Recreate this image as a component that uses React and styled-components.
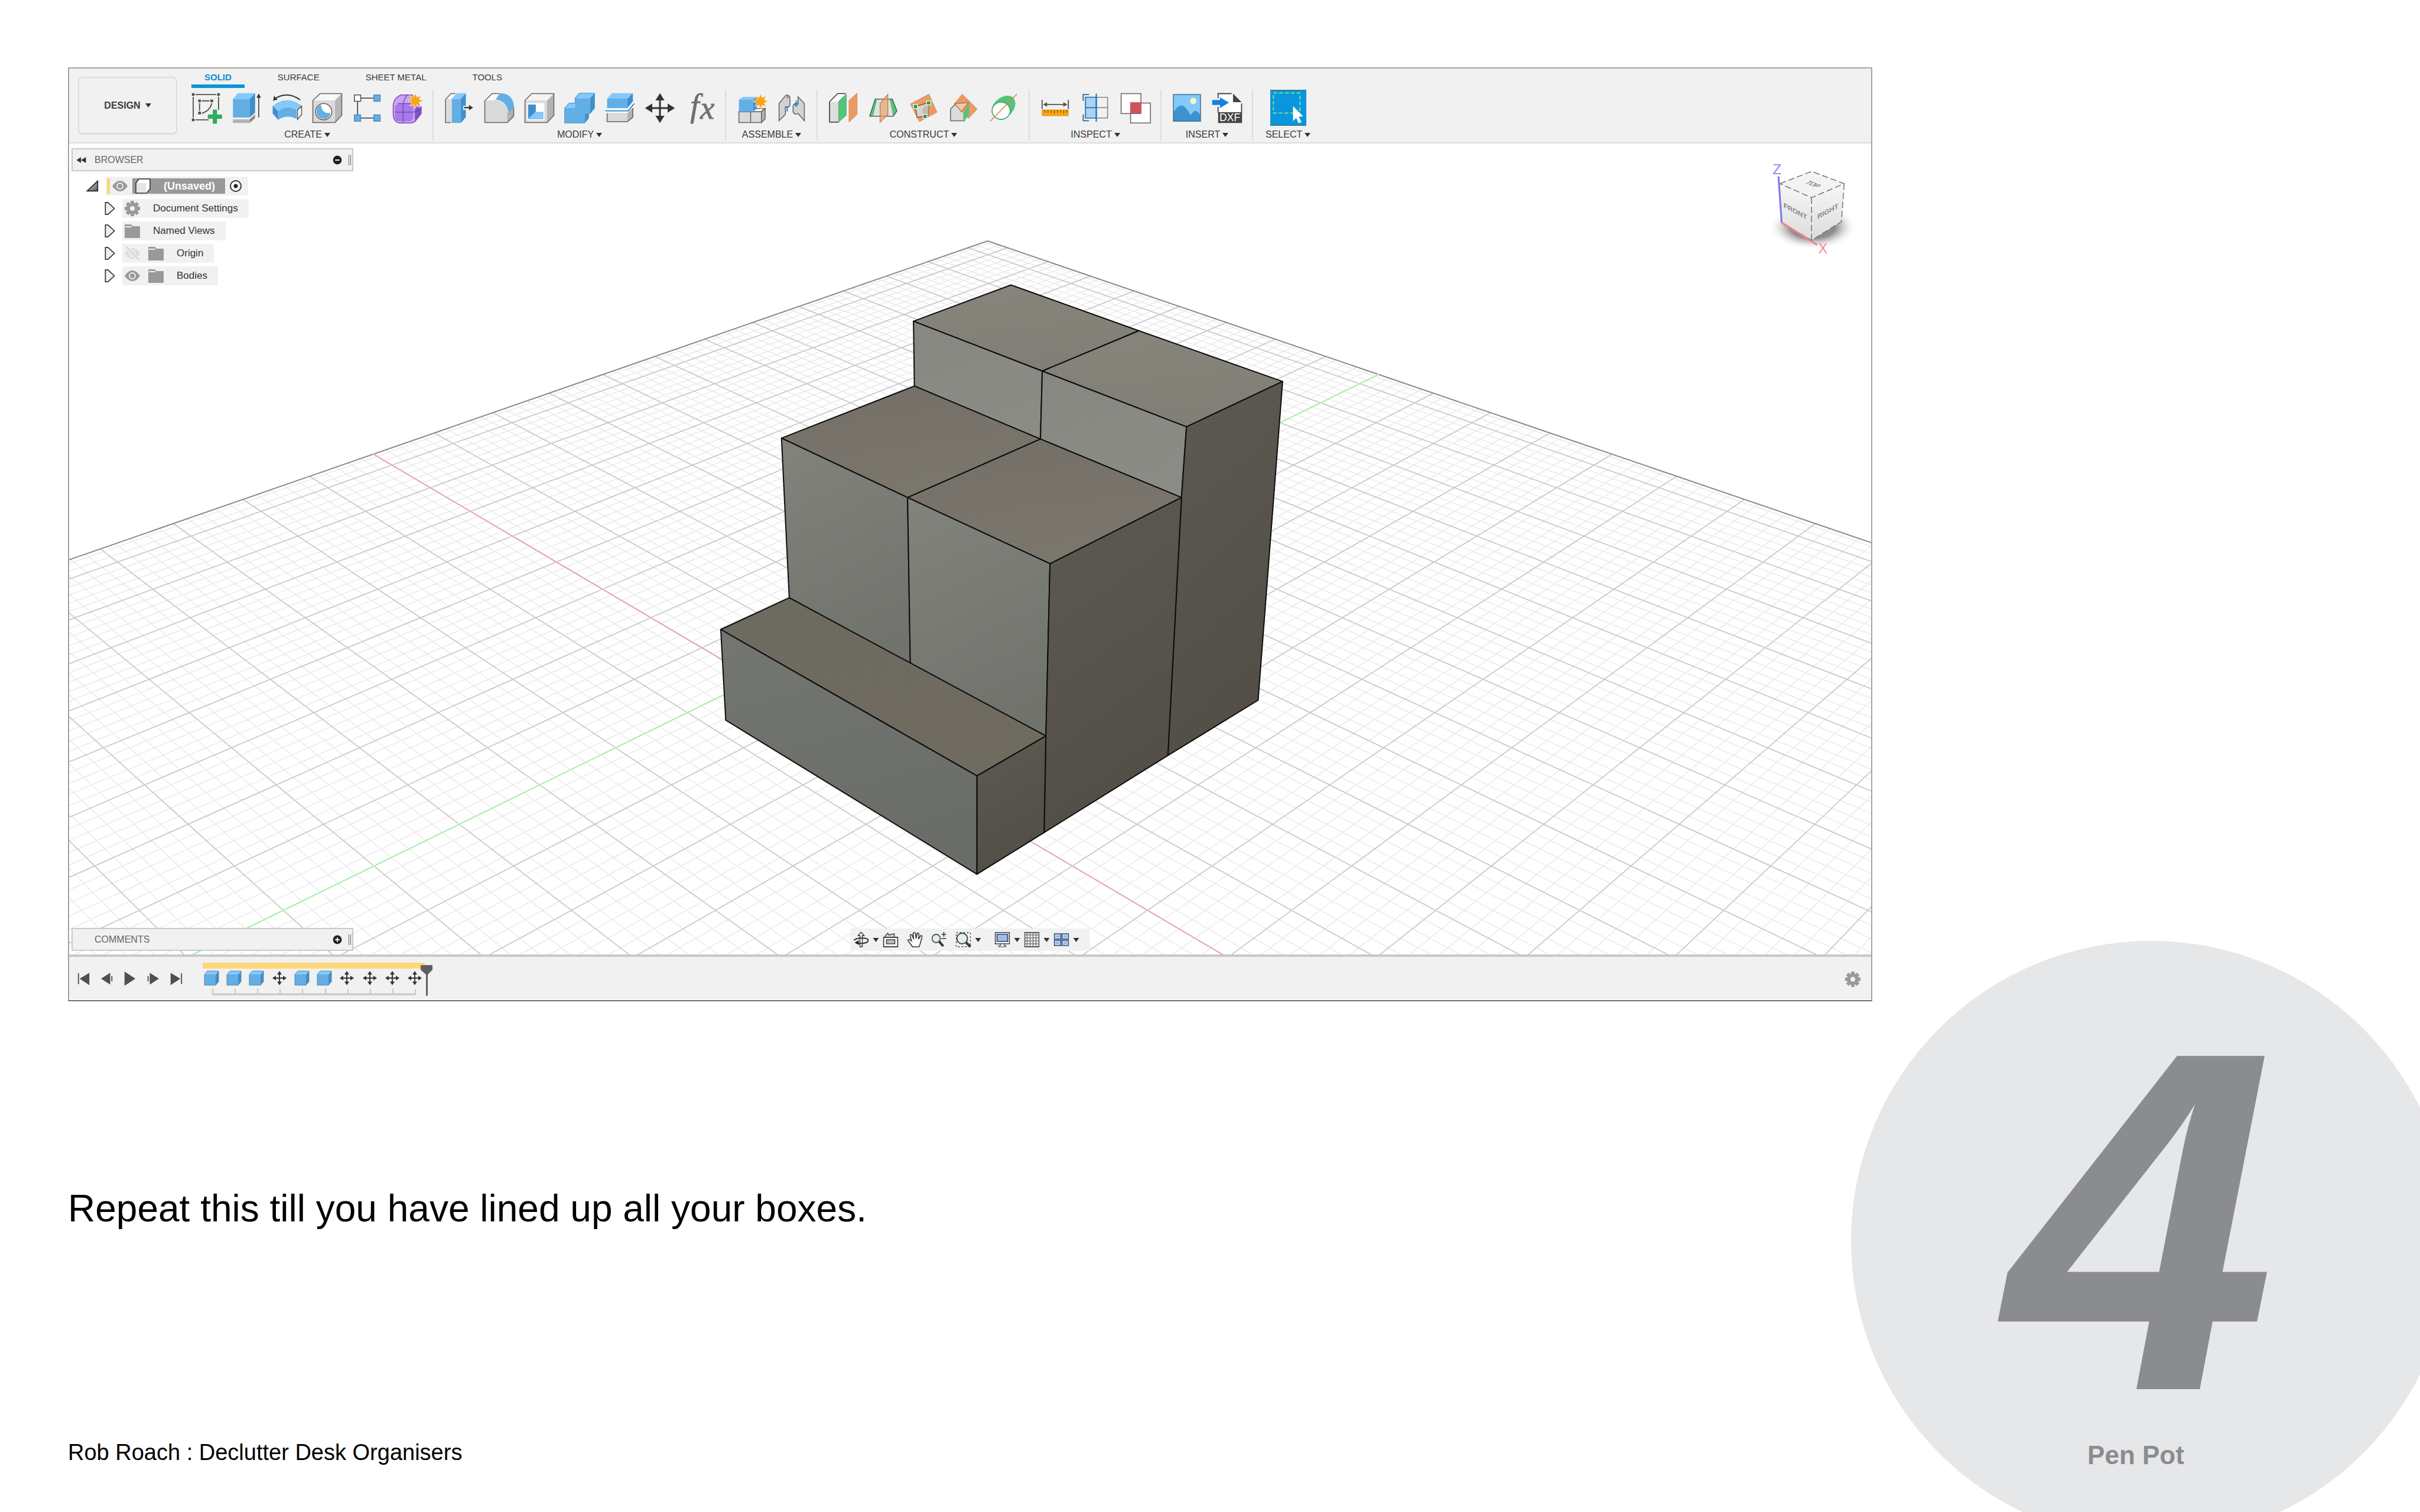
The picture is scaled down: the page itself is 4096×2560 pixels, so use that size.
import React, { useState } from 'react';
import styled, { createGlobalStyle } from 'styled-components';

const BLUE = '#62aee5';
const LIGHT = '#85c8fb';
const DARK = '#3f8fcc';
const LINE = '#6a6361';

/* ---------- toolbar icons, all drawn on a 68 x 68 board ---------- */

const starPoints = (cx, cy, outer, inner) =>
  Array.from({ length: 16 }, (_, i) => {
    const r = i % 2 ? inner : outer;
    const a = (Math.PI * i) / 8 - Math.PI / 2;
    return `${cx + r * Math.cos(a)},${cy + r * Math.sin(a)}`;
  }).join(' ');

const Star = ({ x, y }) => (
  <polygon points={starPoints(x, y, 17, 9)} fill="#fba512" stroke="#f1f1f1" strokeWidth="1" />
);

const toolIcons = {
  sketch: (
    <>
      <path d="M9 4H55M4 9V55M9 60H38M60 9V38M23 18H40M18 23V40M45 23Q42 39 23 46" fill="none" stroke="#55504e" strokeWidth="2.4" />
      <path d="M1 1h6v6h-6zM57 1h6v6h-6zM1 57h6v6h-6zM15 15h6v6h-6zM42 15h6v6h-6zM15 42h6v6h-6z" fill="#55504e" />
      <path d="M48 38h8v11h11v8h-11v11h-8v-11h-11v-8h11z" fill="#26b35b" stroke="#169144" strokeWidth="1" />
    </>
  ),
  extrude: (
    <>
      <path d="M3 14L14 1H52L40 14z" fill={LIGHT} />
      <path d="M3 14H40V55H3z" fill={BLUE} />
      <path d="M40 14L52 1V44L40 55z" fill={DARK} />
      <path d="M3 59H40V67H3z" fill="#b5b3b2" />
      <path d="M40 59L52 48V56L40 67z" fill="#8e8b8a" />
      <path d="M60 8V55" stroke="#333" strokeWidth="2" />
      <path d="M60 2l5 9h-10z" fill="#333" />
    </>
  ),
  revolve: (
    <>
      <path d="M6 14Q34 -5 63 16" fill="none" stroke="#333" strokeWidth="2.6" />
      <path d="M3 18L5 7L13 15z" fill="#333" />
      <path d="M2 29Q34 4 67 29L55 38Q34 26 14 41z" fill={LIGHT} />
      <path d="M14 41Q34 26 55 38V58Q34 47 14 60z" fill={BLUE} />
      <path d="M2 29L14 41V60L2 46z" fill={DARK} />
      <path d="M57 38L66 30V48L57 59z" fill="#fff" stroke="#555" strokeWidth="2" />
    </>
  ),
  hole: (
    <>
      <path d="M2 17L18 2H66L51 17z" fill="#f8f8f8" />
      <path d="M2 17H51V66H2z" fill="#dadada" />
      <path d="M51 17L66 2V50L51 66z" fill="#b9b7b6" />
      <path d="M2 17L18 2H66V50L51 66H2z" fill="none" stroke={LINE} strokeWidth="2" />
      <circle cx="26" cy="42" r="18" fill="#fff" stroke={LINE} strokeWidth="2" />
      <path d="M20 27C22 42 30 47 41 44C40 52 34 58 26 58C17 58 10 51 10 42C10 35 14 29 20 27z" fill={BLUE} />
    </>
  ),
  pattern: (
    <>
      <path d="M19 12H48M12 19V49M19 56H48" stroke="#55504e" strokeWidth="2.4" />
      <path d="M5 5h14v14h-14z" fill="#fff" stroke="#55504e" strokeWidth="2" />
      <path d="M48 5h14v14h-14zM5 49h14v14h-14zM48 49h14v14h-14z" fill={BLUE} stroke="#4d8fc0" strokeWidth="2" />
    </>
  ),
  form: (
    <>
      <path d="M2 28Q3 12 18 5H44L64 32V46L50 64Q46 67 42 67H16Q4 66 2 50z" fill="#c9a3f5" stroke="#7d4cc0" strokeWidth="2" />
      <path d="M50 30L64 34V46L50 63z" fill="#7f52c4" />
      <rect x="6" y="25" width="40" height="38" rx="8" fill="#a879ea" />
      <path d="M6 43H46Q58 41 64 34M24 25V66M24 25Q27 10 34 5M12 24H44" fill="none" stroke="#6f42b3" strokeWidth="1.6" />
      <Star x={51} y={18} />
    </>
  ),
  pressPull: (
    <>
      <path d="M4 15L16 2H26L18 14V66H4z" fill="#dcdcdc" />
      <path d="M4 15L16 2H26L17 14H4z" fill="#fbfbfb" />
      <path d="M26 2H16L4 15V66H16" fill="none" stroke={LINE} strokeWidth="2" />
      <path d="M18 14L29 1H49L38 14z" fill={LIGHT} />
      <path d="M18 14H38V67H18z" fill={BLUE} />
      <path d="M38 14L49 1V54L38 67z" fill={DARK} />
      <path d="M43 29H57V38H43z" fill="#f1f1f1" />
      <path d="M45 33H59" stroke="#333" strokeWidth="3" />
      <path d="M56 27L65 33L56 39z" fill="#333" />
    </>
  ),
  fillet: (
    <>
      <path d="M2 18L18 2H34L26 16Q50 20 52 43L66 33V52L52 66H2z" fill="#dadada" />
      <path d="M2 18L18 2H34L26 16z" fill="#fafafa" />
      <path d="M52 44L66 33V52L52 66z" fill="#b3b1b0" />
      <path d="M34 2H18L2 18V66H52L66 52V33" fill="none" stroke={LINE} strokeWidth="2" />
      <path d="M26 15L36 1Q66 2 67 34L54 43Q50 18 26 15z" fill={BLUE} />
    </>
  ),
  shell: (
    <>
      <path d="M2 17L17 2H66L51 17z" fill="#f4f4f4" />
      <path d="M2 17H51V66H2z" fill="#dadada" />
      <path d="M51 17L66 2V50L51 66z" fill="#b5b3b2" />
      <path d="M2 17L17 2H66V50L51 66H2z" fill="none" stroke={LINE} strokeWidth="2" />
      <path d="M7 23H45V61H7z" fill="#fff" />
      <path d="M9 26H26V42L9 58z" fill={DARK} />
      <path d="M9 58L26 43H42V58z" fill={LIGHT} stroke={BLUE} strokeWidth="1" />
    </>
  ),
  combine: (
    <>
      <path d="M24 12L33 1H67L57 12z" fill={LIGHT} />
      <path d="M1 34L11 23H24V34z" fill={LIGHT} />
      <path d="M24 12H57V46H45V67H1V34H24z" fill={BLUE} />
      <path d="M57 12L67 1V34L57 46z" fill={DARK} />
      <path d="M45 46H54V56L45 67z" fill={DARK} />
      <path d="M1 34V67H45L54 56V46H57L67 34V1H33L24 12V23H11z" fill="none" stroke="#4295d0" strokeWidth="1.4" />
    </>
  ),
  split: (
    <>
      <path d="M6 13L17 1H63L51 13z" fill={LIGHT} />
      <path d="M6 13H51V34H6z" fill={BLUE} />
      <path d="M51 13L63 1V19L51 34z" fill={DARK} />
      <path d="M2 40H53L66 24" fill="none" stroke="#fff" strokeWidth="7" />
      <path d="M2 40H53L66 24" fill="none" stroke="#1583c7" strokeWidth="2.4" />
      <path d="M6 45H51V64H6z" fill="#dadada" />
      <path d="M51 45L63 33V54L51 64z" fill="#b5b3b2" />
      <path d="M6 45V64H51L63 54V34" fill="none" stroke={LINE} strokeWidth="2" />
    </>
  ),
  move: (
    <>
      <path d="M34 10V58M10 34H58" stroke="#333" strokeWidth="4" />
      <path d="M34 1L44 17H24zM34 67L44 51H24zM1 34L17 24V44zM67 34L51 24V44z" fill="#333" />
    </>
  ),
  params: (
    <g fontFamily="Liberation Serif, serif" fontStyle="italic" fill="#6f6f6f" stroke="#6f6f6f">
      <text x="12" y="52" fontSize="72">f</text>
      <text x="34" y="57" fontSize="72">x</text>
    </g>
  ),
  component: (
    <>
      <path d="M6 42H32V66H6zM32 42H56V66H32z" fill="#dadada" stroke={LINE} strokeWidth="2" />
      <path d="M32 42L39 35H64L56 42z" fill="#fafafa" stroke={LINE} strokeWidth="2" />
      <path d="M56 42L64 35V58L56 66z" fill="#b5b3b2" stroke={LINE} strokeWidth="2" />
      <path d="M6 15L15 9H46L38 15z" fill={LIGHT} />
      <path d="M6 15H38V42H6z" fill={BLUE} />
      <path d="M38 15L46 9V34L38 42z" fill={DARK} />
      <Star x={54} y={19} />
    </>
  ),
  joint: (
    <>
      <path d="M6 24L20 7Q24 3 28 7Q31 9 30 15V28Q27 34 20 31V48L6 62z" fill="#d2d2d2" stroke={LINE} strokeWidth="2" />
      <path d="M62 24L48 9V24Q38 22 37 30V42Q40 50 48 46L62 62z" fill="#d2d2d2" stroke={LINE} strokeWidth="2" />
      <path d="M24 30V42M44 17V28" stroke="#1583c7" strokeWidth="2.4" />
      <path d="M40 24L44 30L48 24" fill="none" stroke="#1583c7" strokeWidth="2" />
      <circle cx="25" cy="10" r="2" fill={LINE} />
    </>
  ),
  offsetPlane: (
    <>
      <path d="M4 20L22 2H40L24 20V65H4z" fill="#dedede" />
      <path d="M4 20L22 2H40L24 20z" fill="#fff" />
      <path d="M24 65H4V20L22 2H40" fill="none" stroke="#333" strokeWidth="2" />
      <path d="M24 19L41 3V50L24 65z" fill="#55c47b" stroke="#3da565" strokeWidth="1" />
      <path d="M47 17L65 1V48L47 65z" fill="#ea9a63" stroke="#d0814b" strokeWidth="1" />
    </>
  ),
  midPlane: (
    <>
      <path d="M4 52L16 14H54L64 40L56 52z" fill="#dfe3e1" />
      <path d="M4 52L16 14L20 16L12 50zM48 14H54L65 41L56 53z" fill="#55c47b" />
      <path d="M4 52L16 14H54L64 40L56 52z" fill="none" stroke="#4c6457" strokeWidth="2" />
      <path d="M27 24L44 4V48L27 65z" fill="#ea9a63" fillOpacity="0.6" stroke="#d0814b" strokeWidth="2" />
    </>
  ),
  anglePlane: (
    <>
      <path d="M5 25L46 3L64 43L25 64z" fill="#ea9a63" stroke="#d0814b" strokeWidth="1" />
      <path d="M16 30L46 22L44 50L20 55z" fill="#ddd2cb" stroke="#7b5743" strokeWidth="2" />
      <path d="M32 36L46 22L44 50L33 53z" fill="#c3bab4" />
      <path d="M12 26h9v9h-9zM41 18h9v9h-9zM33 48h9v9h-9z" fill="#20a04c" stroke="#fff" strokeWidth="1.6" />
    </>
  ),
  tangentPlane: (
    <>
      <path d="M5 36L18 23H36V62H5z" fill="#dcdcdc" stroke={LINE} strokeWidth="2" />
      <path d="M31 3L64 36L45 57L14 24z" fill="#ea9a63" stroke="#d0814b" strokeWidth="1" />
      <path d="M14 24L45 22L29 42z" fill="#f2c9ab" stroke="#a56b41" strokeWidth="1.6" />
      <path d="M33 46L46 23V50L33 64z" fill="#55c47b" />
    </>
  ),
  axis: (
    <>
      <path d="M8 40C6 18 38 -2 54 10C66 22 58 46 34 58C50 40 46 26 32 24C20 24 9 32 8 40z" fill="#55c47b" />
      <ellipse cx="28" cy="40" rx="20" ry="19" fill="#fff" stroke="#3da565" strokeWidth="2" />
      <path d="M4 63L63 3" stroke="#e07a55" strokeWidth="2" />
    </>
  ),
  measure: (
    <>
      <path d="M5 16V36M63 16V36M9 26H59" stroke="#55504e" strokeWidth="2.4" />
      <path d="M7 26l9-5v10zM61 26l-9-5v10z" fill="#55504e" />
      <path d="M5 38H63V51H5z" fill="#fba512" stroke="#d88a08" strokeWidth="1" />
      <path d="M11 39v5M18 39v5M25 39v5M32 39v7M39 39v5M46 39v5M53 39v7M60 39v5" stroke="#6d4707" strokeWidth="1.6" />
    </>
  ),
  section: (
    <>
      <path d="M36 10H61V56H36M36 33H61" fill="none" stroke="#8d7f7a" strokeWidth="2" />
      <path d="M12 10H36V56H12z" fill="#aed2ee" stroke="#2c79b4" strokeWidth="2.4" />
      <path d="M12 33H36" stroke="#2c79b4" strokeWidth="2.4" />
      <path d="M36 2V64" stroke="#1583c7" strokeWidth="3" />
      <path d="M20 4H7V18M20 62H7V48" fill="none" stroke="#2a6a98" strokeWidth="2.4" />
    </>
  ),
  interference: (
    <>
      <path d="M23 23H67V67H23z" fill="#fff" stroke={LINE} strokeWidth="2" />
      <path d="M2 2H46V46H2z" fill="#fff" stroke={LINE} strokeWidth="2" />
      <path d="M22 21H47V46H22z" fill="#cf5459" />
    </>
  ),
  image: (
    <>
      <path d="M4 4H64V63H4z" fill={LIGHT} />
      <circle cx="48" cy="18" r="7" fill="#fff6c5" />
      <path d="M4 44Q13 28 22 28Q31 29 42 50Q48 40 53 40Q59 42 64 50V63H4z" fill="#3c92cc" />
      <path d="M4 4H64V63H4z" fill="none" stroke="#43718f" strokeWidth="2" />
    </>
  ),
  dxf: (
    <>
      <path d="M14 3H46L66 22V60H14z" fill="#fff" />
      <path d="M14 12V2H44M66 24V44M14 31V44" fill="none" stroke="#444" strokeWidth="2.4" />
      <path d="M47 2L66 21H47z" fill="#444" />
      <path d="M14 43H67V67H14z" fill="#444" />
      <path d="M1 16H18V10L38 22L18 34V27H1z" fill="#1583dd" />
      <text x="40" y="63" textAnchor="middle" fontFamily="Liberation Sans, sans-serif" fontSize="23" fill="#fff">DXF</text>
    </>
  ),
  select: (
    <>
      <path d="M0 0H68V68H0z" fill="#0a96dd" />
      <path d="M0 1H68M0 67H68" stroke="#2f7f8b" strokeWidth="2" />
      <path d="M6 6H56V44H6z" fill="none" stroke="#7eea8e" strokeWidth="2" strokeDasharray="7 4" />
      <path d="M43 31L62 50L54 51L59 61L53 63L49 53L43 59z" fill="#fff" />
    </>
  ),
};

const ToolIcon = ({ name }) => (
  <svg viewBox="0 0 68 68" overflow="visible" aria-hidden="true">{toolIcons[name]}</svg>
);

/* ---------- small icons, 26 x 26 ---------- */

const teeth = Array.from({ length: 8 }, (_, i) => i * 45);

const smallIcons = {
  gear: (
    <>
      {teeth.map((a) => (
        <path key={a} d="M10 0H16V6H10z" fill="#999" transform={`rotate(${a} 13 13)`} />
      ))}
      <circle cx="13" cy="13" r="7" fill="none" stroke="#999" strokeWidth="6" />
    </>
  ),
  folder: <path d="M0 2H11L14 5H26V25H0zM1 5V7H12V5z" fill="#999" fillRule="evenodd" />,
  eye: (
    <>
      <path d="M0 13Q6 4 13 4Q20 4 26 13Q20 22 13 22Q6 22 0 13z" fill="#999" />
      <circle cx="13" cy="13" r="5" fill="none" stroke="#eee" strokeWidth="2" />
    </>
  ),
  eyeOff: (
    <>
      <path d="M0 13Q6 4 13 4Q20 4 26 13Q20 22 13 22Q6 22 0 13z" fill="#dcdcdc" />
      <circle cx="13" cy="13" r="5" fill="none" stroke="#eee" strokeWidth="2" />
      <path d="M3 2L24 24" stroke="#f1f1f1" strokeWidth="5" />
      <path d="M3 2L24 24" stroke="#d0d0d0" strokeWidth="2" />
    </>
  ),
  doc: (
    <>
      <path d="M1 8L6 1H25V18L19 25H1z" fill="#fff" />
      <path d="M2 8H19V24H2z" fill="#e3e4ea" />
      <path d="M1 8L6 1H25V18L19 25H1z" fill="none" stroke="#333" strokeWidth="1.6" />
      <path d="M19 8V24" stroke="#fff" strokeWidth="1.6" />
    </>
  ),
  first: <path d="M3 3V23M22 4L7 13L22 23z" fill="#4f4f4f" stroke="#4f4f4f" strokeWidth="2" />,
  back: <path d="M18 4L4 13L18 22zM22 8V18" fill="#4f4f4f" stroke="#4f4f4f" strokeWidth="2" />,
  play: <path d="M3 0L23 13L3 26z" fill="#4f4f4f" />,
  forward: <path d="M8 4L22 13L8 22zM4 8V18" fill="#4f4f4f" stroke="#4f4f4f" strokeWidth="2" />,
  last: <path d="M23 3V23M4 4L19 13L4 23z" fill="#4f4f4f" stroke="#4f4f4f" strokeWidth="2" />,
  cube: (
    <>
      <path d="M1 7L6 1H25L20 7z" fill={LIGHT} />
      <path d="M1 7H20V25H1z" fill={BLUE} />
      <path d="M20 7L25 1V19L20 25z" fill={DARK} />
      <path d="M1 25V7L6 1H25V19L20 25z" fill="none" stroke="#5d87a3" strokeWidth="1" />
    </>
  ),
  move: (
    <>
      <path d="M13 4V22M4 13H22" stroke="#333" strokeWidth="2" />
      <path d="M13 1L17 7H9zM13 25L17 19H9zM1 13L7 9V17zM25 13L19 9V17z" fill="#333" />
    </>
  ),
  orbit: (
    <>
      <path d="M11 25V6H8L13 0L18 6H15V25z" fill="#fff" stroke="#333" strokeWidth="1.4" />
      <path d="M8 19C14 20 25 19 25 14C25 9 6 9 1 14" fill="none" stroke="#333" strokeWidth="2.2" />
      <path d="M2 18L9 14V22z" fill="#222" />
    </>
  ),
  lookAt: (
    <>
      <path d="M1 9H25V25H1z" fill="#fff" stroke="#444" strokeWidth="2" />
      <path d="M3 8L8 2L10 5L19 3V8" fill="#ddd" stroke="#444" strokeWidth="1.6" />
      <path d="M6 13H20V20H6z" fill="#b9bdc9" stroke="#444" strokeWidth="1.6" />
    </>
  ),
  pan: (
    <path d="M9 25C6 21 4 18 1 14Q3 11 7 15L5 6Q6 3 8 5L11 12L10 2Q12 0 14 2L15 11L17 2Q19 1 20 4L19 12L23 6Q26 6 25 9C23 14 23 19 20 25z" fill="#fff" stroke="#333" strokeWidth="1.6" />
  ),
  zoom: (
    <>
      <circle cx="8" cy="11" r="7" fill="#dff0ee" stroke="#555" strokeWidth="1.8" />
      <path d="M13 16L20 24" stroke="#333" strokeWidth="4" />
      <path d="M21 0V8M17 4H25M17 11H25" stroke="#333" strokeWidth="1.6" />
    </>
  ),
  fit: (
    <>
      <path d="M1 1H25V25H1z" fill="none" stroke="#444" strokeWidth="1.4" strokeDasharray="3 3" />
      <circle cx="11" cy="11" r="9" fill="#dff0ee" stroke="#444" strokeWidth="2" />
      <path d="M18 18L25 25" stroke="#333" strokeWidth="4" />
    </>
  ),
  display: (
    <>
      <path d="M1 1H25V20H1z" fill="#fff" stroke="#333d50" strokeWidth="1.6" />
      <path d="M4 4H22V16H4z" fill="#9dbfea" stroke="#333d50" strokeWidth="1.6" />
      <path d="M10 20V23H7V25H19V23H16V20z" fill="#fff" stroke="#333d50" strokeWidth="1.2" />
    </>
  ),
  grid: (
    <>
      <path d="M1 1H25V25H1z" fill="#fff" stroke="#555" strokeWidth="1.8" />
      <path d="M5 1V25M10 1V25M15 1V25M20 1V25M1 5H25M1 10H25M1 15H25M1 20H25" stroke="#777" strokeWidth="1.6" />
    </>
  ),
  views: (
    <>
      <path d="M1 3H12V12H1zM14 3H25V12H14zM1 14H12V23H1zM14 14H25V23H14z" fill="#b9d2f2" stroke="#33507f" strokeWidth="1.6" />
      <path d="M4 6H9V9H4zM17 6H22V9H17zM4 17H9V20H4zM17 17H22V20H17z" fill="#8fb4e4" />
    </>
  ),
  rewind: <path d="M13 7V19L4 13zM23 7V19L13 13z" fill="#333" />,
  minus: (
    <>
      <circle cx="13" cy="13" r="12" fill="#222" />
      <path d="M7 13H19" stroke="#fff" strokeWidth="3" />
    </>
  ),
  plus: (
    <>
      <circle cx="13" cy="13" r="12" fill="#222" />
      <path d="M7 13H19M13 7V19" stroke="#fff" strokeWidth="3" />
    </>
  ),
  open: (
    <>
      <linearGradient id="openFade" x1="0" y1="0" x2="1" y2="1">
        <stop offset="0" stopColor="#eee" />
        <stop offset="1" stopColor="#555" />
      </linearGradient>
      <path d="M24 3V23H3z" fill="url(#openFade)" stroke="#222" strokeWidth="2" />
    </>
  ),
  closed: <path d="M4 1L9 1L22 13L9 25H4z" fill="#efefef" stroke="#333" strokeWidth="2" />,
};

const SmallIcon = ({ name, size = 26 }) => (
  <svg width={size} height={size} viewBox="0 0 26 26" aria-hidden="true">{smallIcons[name]}</svg>
);

/* ---------- ground plane ---------- */

// u runs down the left edge of the plane, v down the right one, in major cells
const project = (u, v) => {
  const depth = 58.975 - u - v;
  return [
    (2134.9 + (5078 * (v - u) + 2450) / depth).toFixed(1),
    (-1216.5 + 103120 / depth).toFixed(1),
  ].join(' ');
};

const U_MAX = 28;
const V_MAX = 24;
const alongV = (u) => `M${project(u, 0)}L${project(u, V_MAX)}`;
const alongU = (v) => `M${project(0, v)}L${project(U_MAX, v)}`;

const steps = (from, step, max, make) => {
  let d = '';
  for (let i = 0; from + i * step < max; i += 1) d += make(from + i * step);
  return d;
};

const minorLines = steps(0.1, 0.2, U_MAX, alongV) + steps(0.1, 0.2, V_MAX, alongU);
const majorLines = steps(0.5, 1, U_MAX, alongV) + steps(0.5, 1, V_MAX, alongU);

const faces = [
  ['topHigh', '2228,629 2510,730 2297,819 2013,709'],
  ['topHigh', '2510,730 2827,842 2615,942 2297,819'],
  ['frontHigh', '2013,709 2297,819 2293,969 2015,852'],
  ['frontHigh', '2297,819 2615,942 2604,1098 2293,969'],
  ['side', '2827,842 2773,1545 2574,1667 2604,1098 2615,942'],
  ['topMid', '2015,852 2293,969 2000,1098 1722,967'],
  ['topMid', '2293,969 2604,1098 2314,1244 2000,1098'],
  ['front', '1722,967 2000,1098 2006,1465 1739,1319'],
  ['front', '2000,1098 2314,1244 2305,1624 2006,1465'],
  ['side', '2604,1098 2574,1667 2301,1837 2305,1624 2314,1244'],
  ['topLow', '1739,1319 2305,1624 2153,1712 1588,1389'],
  ['frontLow', '1588,1389 2153,1712 2153,1929 1599,1589'],
  ['side', '2305,1624 2301,1837 2153,1929 2153,1712'],
];

const shades = {
  topHigh: ['#87847b', '#817e76'],
  topMid: ['#747068', '#7b776d'],
  topLow: ['#6d6a60', '#706b5f'],
  frontHigh: ['#868881', '#8b8c85'],
  front: ['#80827b', '#70726c'],
  frontLow: ['#737570', '#6a6c67'],
  side: ['#5c5952', '#524e46'],
};

const Model = () => (
  <Scene viewBox="151 317 3974 1789" preserveAspectRatio="xMidYMid slice" role="img" aria-label="Stepped boxes on the ground plane">
    <defs>
      {Object.entries(shades).map(([id, [from, to]]) => (
        <linearGradient key={id} id={id} x1="0.3" y1="0" x2="0.6" y2="1">
          <stop offset="0" stopColor={from} />
          <stop offset="1" stopColor={to} />
        </linearGradient>
      ))}
    </defs>
    <g fill="none">
      <path d={minorLines} stroke="#eaeaea" strokeWidth="2" />
      <path d={majorLines} stroke="#c9c9c9" strokeWidth="2.2" />
      <path d={alongV(0) + alongU(0)} stroke="#8a8a8a" strokeWidth="2.6" />
      <path d={alongU(8.5) + alongV(12.5)} stroke="#fff" strokeWidth="4" />
      <path d={alongV(12.5)} stroke="#e3a3a3" strokeWidth="2.6" />
      <path d={alongU(8.5)} stroke="#a2eea2" strokeWidth="2.6" />
    </g>
    <g stroke="#0c0c0c" strokeWidth="2.6" strokeLinejoin="round">
      {faces.map(([shade, points]) => (
        <polygon key={points} points={points} fill={`url(#${shade})`} />
      ))}
    </g>
  </Scene>
);

const ViewCube = () => (
  <CubeBox viewBox="0 0 300 270" role="img" aria-label="View cube">
    <defs>
      <radialGradient id="cubeShadow">
        <stop offset="0.5" stopColor="#8c8c8c" />
        <stop offset="1" stopColor="#fff" stopOpacity="0" />
      </radialGradient>
      <linearGradient id="cubeSide" x1="0" y1="0" x2="0" y2="1">
        <stop offset="0" stopColor="#f7f7f7" />
        <stop offset="1" stopColor="#dcdcdc" />
      </linearGradient>
    </defs>
    <ellipse cx="148" cy="182" rx="98" ry="50" fill="url(#cubeShadow)" />
    <path d="M75 86L145 59L217 86L145 117z" fill="#f3f3f3" />
    <path d="M75 86L145 117V211L79 172z" fill="url(#cubeSide)" />
    <path d="M217 86L145 117V211L211 170z" fill="url(#cubeSide)" />
    <path d="M75 86L145 59L217 86L145 117zM145 117V211M217 86L211 170L145 211L79 172" fill="none" stroke="#777" strokeWidth="2" strokeDasharray="14 6" />
    <path d="M72 70L79 172" stroke="#7d78ea" strokeWidth="4" />
    <path d="M79 172L157 221" stroke="#ee8088" strokeWidth="4" />
    <g fontFamily="Liberation Sans, sans-serif" fill="#86868c">
      <text x="59" y="65" fontSize="32" fill="#8f8af5">Z</text>
      <text x="160" y="240" fontSize="30" fill="#ff8088">X</text>
      <text fontSize="15" fontWeight="bold" textAnchor="middle" transform="translate(109 152) skewY(28)">FRONT</text>
      <text fontSize="15" fontWeight="bold" textAnchor="middle" transform="translate(181 152) skewY(-28)">RIGHT</text>
      <text fontSize="14" fontWeight="bold" textAnchor="middle" transform="translate(142 90) rotate(22) skewX(-45)">TOP</text>
    </g>
  </CubeBox>
);

/* ---------- data ---------- */

const tabs = ['SOLID', 'SURFACE', 'SHEET METAL', 'TOOLS'];

const toolGroups = [
  { label: 'CREATE', tools: ['sketch', 'extrude', 'revolve', 'hole', 'pattern', 'form'] },
  { label: 'MODIFY', tools: ['pressPull', 'fillet', 'shell', 'combine', 'split', 'move', 'params'] },
  { label: 'ASSEMBLE', tools: ['component', 'joint'] },
  { label: 'CONSTRUCT', tools: ['offsetPlane', 'midPlane', 'anglePlane', 'tangentPlane', 'axis'] },
  { label: 'INSPECT', tools: ['measure', 'section', 'interference'] },
  { label: 'INSERT', tools: ['image', 'dxf'] },
  { label: 'SELECT', tools: ['select'], large: true },
];

const treeItems = [
  { label: 'Document Settings', icons: ['gear'] },
  { label: 'Named Views', icons: ['folder'] },
  { label: 'Origin', icons: ['eyeOff', 'folder'] },
  { label: 'Bodies', icons: ['eye', 'folder'] },
];

const navTools = [
  { icon: 'orbit', menu: true },
  { icon: 'lookAt' },
  { icon: 'pan' },
  { icon: 'zoom' },
  { icon: 'fit', menu: true, last: true },
  { icon: 'display', menu: true },
  { icon: 'grid', menu: true },
  { icon: 'views', menu: true },
];

const playback = ['first', 'back', 'play', 'forward', 'last'];
const features = ['cube', 'cube', 'cube', 'move', 'cube', 'cube', 'move', 'move', 'move', 'move'];

function App() {
  const [activeTab, setActiveTab] = useState('SOLID');

  return (
    <Page>
      <GlobalStyle />
      <Window>
        <Toolbar>
          <DesignButton>DESIGN <Caret /></DesignButton>
          <div>
            <Tabs>
              {tabs.map((tab) => (
                <Tab key={tab} $active={tab === activeTab} onClick={() => setActiveTab(tab)}>{tab}</Tab>
              ))}
            </Tabs>
            <Groups>
              {toolGroups.map((group) => (
                <Group key={group.label}>
                  <Tools>
                    {group.tools.map((name) => (
                      <ToolButton key={name} aria-label={name} $large={group.large}>
                        <ToolIcon name={name} />
                      </ToolButton>
                    ))}
                  </Tools>
                  <GroupLabel>{group.label} <Caret /></GroupLabel>
                </Group>
              ))}
            </Groups>
          </div>
        </Toolbar>

        <Canvas>
          <Model />
          <BrowserPanel>
            <PanelBar>
              <SmallIcon name="rewind" size={22} />
              <PanelTitle>BROWSER</PanelTitle>
              <SmallIcon name="minus" size={16} />
              <Grip />
            </PanelBar>
            <Tree>
              <TreeRow>
                <SmallIcon name="open" size={22} />
                <RootItem>
                  <SmallIcon name="eye" />
                  <RootName>
                    <SmallIcon name="doc" />
                    (Unsaved)
                  </RootName>
                  <input type="radio" aria-label="Activate component" defaultChecked />
                </RootItem>
              </TreeRow>
              {treeItems.map((item) => (
                <TreeRow key={item.label} $child>
                  <SmallIcon name="closed" size={22} />
                  <TreeItem>
                    {item.icons.map((icon) => <SmallIcon key={icon} name={icon} />)}
                    <span>{item.label}</span>
                  </TreeItem>
                </TreeRow>
              ))}
            </Tree>
          </BrowserPanel>
          <ViewCube />
          <CommentsPanel>
            <PanelBar>
              <PanelTitle $indent>COMMENTS</PanelTitle>
              <SmallIcon name="plus" size={16} />
              <Grip />
            </PanelBar>
          </CommentsPanel>
          <NavBar>
            {navTools.map((tool) => (
              <NavButton key={tool.icon} aria-label={tool.icon} $menu={tool.menu} $last={tool.last}>
                <SmallIcon name={tool.icon} />
                {tool.menu && <Caret />}
              </NavButton>
            ))}
          </NavBar>
        </Canvas>

        <Timeline>
          <Playback>
            {playback.map((name) => (
              <IconButton key={name} aria-label={name}><SmallIcon name={name} size={24} /></IconButton>
            ))}
          </Playback>
          <Track>
            <Range />
            <Features>
              {features.map((name, i) => (
                <IconButton key={i} aria-label={`${name} ${i + 1}`}><SmallIcon name={name} /></IconButton>
              ))}
            </Features>
            <Ticks>
              {features.slice(1).map((name, i) => <i key={i} />)}
            </Ticks>
          </Track>
          <Marker viewBox="0 0 20 52" aria-hidden="true">
            <path d="M0 0H20V8L12 16V52H9V16L0 8z" fill="#5f5f5f" />
          </Marker>
          <SettingsButton aria-label="Settings"><SmallIcon name="gear" /></SettingsButton>
        </Timeline>
      </Window>

      <Caption>Repeat this till you have lined up all your boxes.</Caption>
      <Footer>Rob Roach : Declutter Desk Organisers</Footer>

      <Badge>
        <StepNumber>4</StepNumber>
        <StepName>Pen Pot</StepName>
      </Badge>
    </Page>
  );
}

const GlobalStyle = createGlobalStyle`
  * {
    box-sizing: border-box;
  }

  body {
    margin: 0;
    background: #fff;
    color: #000;
    font-family: 'Liberation Sans', Arial, sans-serif;
  }

  svg {
    display: block;
    flex-shrink: 0;
  }

  button {
    padding: 0;
    border: 0;
    background: none;
    color: inherit;
    font-family: inherit;
    cursor: pointer;
  }
`;

const Page = styled.main`
  position: relative;
  display: flex;
  flex-direction: column;
  min-height: 100vh;
  padding: 114px 115px 79px;
  overflow: hidden;
`;

const Window = styled.section`
  width: 79%; /* leaves the right margin free */
  border: 2px solid #a3a3a3;
  border-bottom: 1px solid #000;
  background: #fff;
`;

const Caret = styled.span`
  display: inline-block;
  margin-left: 4px;
  border: 5px solid transparent;
  border-top: 7px solid #333;
  border-bottom: 0;
`;

/* toolbar */

const Toolbar = styled.header`
  display: flex;
  background: #f1f1f1;
  border-bottom: 2px solid #dcdcdc;
  color: #3a3a3a;
`;

const DesignButton = styled.button`
  display: flex;
  align-items: center;
  justify-content: center;
  gap: 4px;
  width: 168px;
  height: 98px;
  margin: 14px 24px 0 15px;
  border: 2px solid #dcdcdc;
  border-bottom-width: 3px;
  border-radius: 8px;
  font-size: 16px;
  font-weight: bold;
`;

const Tabs = styled.nav`
  display: flex;
  gap: 34px;
`;

const Tab = styled.button`
  padding: 6px 22px 3px;
  border-bottom: 6px solid ${({ $active }) => ($active ? '#0a96d8' : 'transparent')};
  color: ${({ $active }) => ($active ? '#0a8fd0' : '#3a3a3a')};
  font-size: 15px;
  font-weight: ${({ $active }) => ($active ? 'bold' : 'normal')};
  line-height: 18px;
`;

const Groups = styled.div`
  display: flex;
  padding: 3px 0;
`;

const Group = styled.div`
  display: flex;
  flex-direction: column;
  align-items: center;
  padding: 0 16px 0 17px;
  border-right: 2px solid #dcdcdc;

  &:first-child {
    padding-left: 0;
  }

  &:last-child {
    border-right: 0;
    padding-left: 21px;
  }
`;

const Tools = styled.div`
  display: flex;
  align-items: center;
  gap: 16px;
  height: 61px;
`;

const ToolButton = styled.button`
  width: ${({ $large }) => ($large ? 61 : 52)}px;
`;

const GroupLabel = styled.button`
  display: flex;
  align-items: center;
  margin-top: 5px;
  font-size: 16px;
  line-height: 20px;
`;

/* canvas */

const Canvas = styled.div`
  position: relative;
  aspect-ratio: 3050 / 1373;
  overflow: hidden;
`;

const Scene = styled.svg`
  width: 100%;
  height: 100%;
`;

const CubeBox = styled.svg`
  position: absolute;
  top: 2px;
  right: -18px;
  width: 230px;
`;

const BrowserPanel = styled.aside`
  position: absolute;
  top: 8px;
  left: 4px;
  width: 477px;
`;

const CommentsPanel = styled.aside`
  position: absolute;
  bottom: 6px;
  left: 4px;
  width: 477px;
`;

const PanelBar = styled.div`
  display: flex;
  align-items: center;
  height: 39px;
  padding: 0 2px 0 3px;
  background: #f1f1f1;
  border: 2px solid #c9c9c9;
`;

const PanelTitle = styled.span`
  flex: 1;
  margin-left: ${({ $indent }) => ($indent ? 34 : 12)}px;
  color: #666;
  font-size: 16px;
  line-height: 20px;
`;

const Grip = styled.span`
  width: 4px;
  height: 18px;
  margin-left: 11px;
  border: solid #666;
  border-width: 0 1px;
`;

const Tree = styled.ul`
  display: flex;
  flex-direction: column;
  gap: 6px;
  margin: 9px 0 0;
  padding: 0;
  list-style: none;
  color: #333;
  font-size: 17px;
`;

const TreeRow = styled.li`
  display: flex;
  align-items: center;
  gap: ${({ $child }) => ($child ? 10 : 12)}px;
  height: 32px;
  padding-left: ${({ $child }) => ($child ? 54 : 24)}px;
`;

const TreeItem = styled.div`
  display: flex;
  align-items: center;
  gap: 14px;
  height: 32px;
  padding: 0 18px 0 4px;
  background: #f1f1f1;

  span {
    margin-left: 8px;
  }
`;

const RootItem = styled.div`
  display: flex;
  align-items: center;
  gap: 8px;
  height: 32px;
  padding: 0 11px 0 2px;
  background: #f1f1f1;

  &::before {
    content: '';
    width: 5px;
    height: 26px;
    margin-right: -4px;
    background: #fbd576;
  }

  input {
    appearance: none;
    width: 20px;
    height: 20px;
    margin: 0;
    border: 2px solid #333;
    border-radius: 50%;
    background: radial-gradient(circle, #222 3px, #fff 4px);
  }
`;

const RootName = styled.span`
  display: flex;
  align-items: center;
  gap: 22px;
  height: 26px;
  padding: 0 17px 0 5px;
  background: #999;
  color: #fff;
  font-size: 18px;
  font-weight: bold;
`;

const NavBar = styled.div`
  position: absolute;
  bottom: 6px;
  left: 50%;
  display: flex;
  align-items: center;
  gap: 15px;
  height: 38px;
  padding: 0 26px 0 5px;
  background: #f1f1f1;
  transform: translateX(-50%);
`;

const NavButton = styled.button`
  display: flex;
  align-items: center;
  gap: 3px;
  margin-right: ${({ $menu, $last }) => ($last ? 8 : $menu ? -8 : 0)}px;
`;

/* timeline */

const Timeline = styled.footer`
  display: flex;
  height: 78px;
  padding: 10px 18px 0 13px;
  background: #f1f1f1;
  border-top: 4px solid #c8c8c8;
`;

const Playback = styled.div`
  display: flex;
  align-items: flex-start;
  gap: 15px;
  padding-top: 15px;
`;

const IconButton = styled.button`
  display: block;
`;

const Track = styled.div`
  width: 376px;
  margin-left: 33px;
`;

const Range = styled.div`
  height: 10px;
  background: #fdd879;
`;

const Features = styled.div`
  display: flex;
  justify-content: space-between;
  padding: 3px 4px 0 2px;
`;

const Ticks = styled.div`
  display: grid;
  grid-template-columns: repeat(9, 1fr);
  height: 11px;
  margin: 5px 15px 0 16px;
  border: solid #c8c8c8;
  border-width: 0 0 3px 2px;

  i {
    height: 8px;
    border-right: 2px solid #c8c8c8;
  }
`;

const Marker = styled.svg`
  width: 20px;
  height: 52px;
  margin: 4px 0 0 -7px;
`;

const SettingsButton = styled.button`
  align-self: flex-start;
  margin: 15px 0 0 auto;
`;

/* text below the window */

const Caption = styled.p`
  margin: 315px 0 0;
  font-size: 64px;
  line-height: 72px;
`;

const Footer = styled.p`
  margin: auto 0 0;
  font-size: 38px;
  line-height: 44px;
`;

const Badge = styled.div`
  position: absolute;
  right: -53px;
  bottom: -49px;
  display: flex;
  flex-direction: column;
  align-items: center;
  width: 1016px;
  height: 1016px;
  padding: 175px 52px 0 0;
  border-radius: 50%;
  background: #e6e7e9;
  color: #8b8c8e;
  font-weight: bold;
`;

const StepNumber = styled.div`
  padding-left: 16px;
  font-size: 820px;
  font-style: italic;
  line-height: 600px;
`;

const StepName = styled.div`
  margin-top: 71px;
  font-size: 44px;
  line-height: 50px;
`;

export default App;
